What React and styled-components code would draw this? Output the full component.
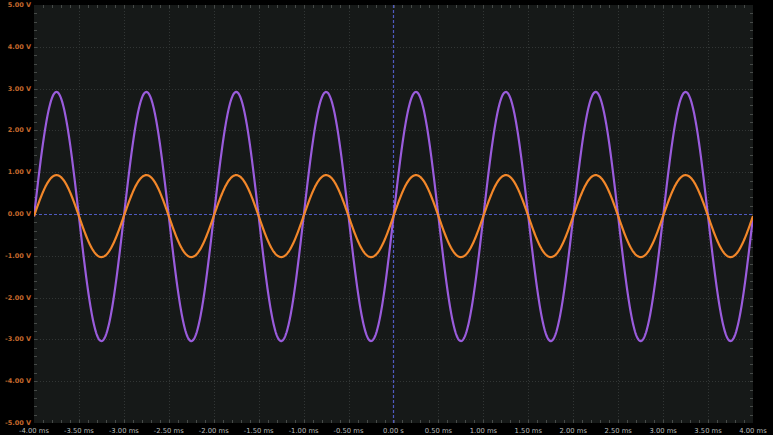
import React from 'react';
import styled, { createGlobalStyle } from 'styled-components';

const PLOT_W = 719;
const PLOT_H = 418;
const LABEL_H = 8;
const X_LABEL_W = 44;

const voltLabels = ['5.00 V', '4.00 V', '3.00 V', '2.00 V', '1.00 V', '0.00 V', '-1.00 V', '-2.00 V', '-3.00 V', '-4.00 V', '-5.00 V'];
const timeLabels = ['-4.00 ms', '-3.50 ms', '-3.00 ms', '-2.50 ms', '-2.00 ms', '-1.50 ms', '-1.00 ms', '-0.50 ms', '0.00 s', '0.50 ms', '1.00 ms', '1.50 ms', '2.00 ms', '2.50 ms', '3.00 ms', '3.50 ms', '4.00 ms'];

const GlobalStyle = createGlobalStyle`
  html, body {
    margin: 0;
    padding: 0;
    background: #000;
    overflow: hidden;
  }
`;

// time in ms -> x, volts -> y
const toX = (t) => (t + 4) / 8 * PLOT_W;
const toY = (v) => PLOT_H / 2 - v * (PLOT_H / 10);
const crisp = (n) => Math.round(n) + 0.5;

const wave = (amp, offset) => {
  let d = '';
  for (let px = 0; px <= PLOT_W; px += 0.5) {
    const t = px / PLOT_W * 8 - 4;
    const v = amp * Math.sin(2 * Math.PI * t) + offset;
    d += (px === 0 ? 'M' : 'L') + px.toFixed(1) + ' ' + toY(v).toFixed(2);
  }
  return d;
};

const Scope = () => {
  // major grid, centre lines left out (drawn blue below)
  const vLines = [];
  for (let i = 1; i < 16; i++) if (i !== 8) vLines.push(toX(-4 + i * 0.5));
  const hLines = [];
  for (let i = 1; i < 10; i++) if (i !== 5) hLines.push(toY(5 - i));

  const xTicks = [];
  for (let i = 1; i < 80; i++) xTicks.push(crisp(toX(-4 + i * 0.1)));
  const yTicks = [];
  for (let i = 1; i < 50; i++) yTicks.push(crisp(toY(5 - i * 0.2)));

  const cx = crisp(toX(0)) - 1;
  const cy = crisp(toY(0));

  return (
    <Screen>
      <VoltAxis>
        {voltLabels.map((l) => <VoltLabel key={l}>{l}</VoltLabel>)}
      </VoltAxis>
      <Plot>
        <svg width={PLOT_W} height={PLOT_H} viewBox={`0 0 ${PLOT_W} ${PLOT_H}`}>
          <rect width={PLOT_W} height={PLOT_H} fill="#161918" />
          <g stroke="#323635" strokeWidth="1" strokeDasharray="1 2">
            {vLines.map((x) => <line key={'v' + x} x1={crisp(x)} x2={crisp(x)} y1="0" y2={PLOT_H} />)}
            {hLines.map((y) => <line key={'h' + y} x1="0" x2={PLOT_W} y1={crisp(y)} y2={crisp(y)} />)}
          </g>
          <g stroke="#464a48" strokeWidth="1">
            {xTicks.map((x) => (
              <g key={'xt' + x}>
                <line x1={x} x2={x} y1="0" y2="3" />
                <line x1={x} x2={x} y1={PLOT_H - 3} y2={PLOT_H} />
              </g>
            ))}
            {yTicks.map((y) => (
              <g key={'yt' + y}>
                <line x1="0" x2="3" y1={y} y2={y} />
                <line x1={PLOT_W - 3} x2={PLOT_W} y1={y} y2={y} />
              </g>
            ))}
          </g>
          <g stroke="#4f5ac0" strokeWidth="1.2" strokeDasharray="3 2">
            <line x1={cx} x2={cx} y1="0" y2={PLOT_H} />
            <line x1="0" x2={PLOT_W} y1={cy} y2={cy} />
          </g>
          <path d={wave(2.98, -0.06)} fill="none" stroke="#9a5cdc" strokeWidth="2.2" />
          <path d={wave(0.98, -0.05)} fill="none" stroke="#f2872a" strokeWidth="2.2" />
        </svg>
      </Plot>
      <Spacer />
      <TimeAxis>
        {timeLabels.map((l) => <TimeLabel key={l}>{l}</TimeLabel>)}
      </TimeAxis>
    </Screen>
  );
};

export default function App() {
  return (
    <>
      <GlobalStyle />
      <Scope />
    </>
  );
}

const Screen = styled.div`
  width: 773px;
  height: 435px;
  box-sizing: border-box;
  padding-top: 5px;
  background: #000;
  display: grid;
  grid-template-columns: 34px ${PLOT_W}px;
  grid-template-rows: ${PLOT_H}px 12px;
  overflow: hidden;
`;

const VoltAxis = styled.div`
  display: flex;
  flex-direction: column;
  justify-content: space-between;
  align-items: flex-end;
  height: ${PLOT_H + LABEL_H}px;
  margin-top: -${LABEL_H / 2}px;
  padding-right: 3px;
`;

const VoltLabel = styled.span`
  height: ${LABEL_H}px;
  line-height: ${LABEL_H}px;
  font-family: "DejaVu Sans", sans-serif;
  font-size: 6.5px;
  font-weight: bold;
  color: #c4682c;
  white-space: nowrap;
`;

const Plot = styled.div`
  width: ${PLOT_W}px;
  height: ${PLOT_H}px;
  svg {
    display: block;
  }
`;

const Spacer = styled.div``;

const TimeAxis = styled.div`
  display: flex;
  justify-content: space-between;
  align-items: flex-end;
  width: ${PLOT_W + X_LABEL_W}px;
  margin-left: -${X_LABEL_W / 2}px;
`;

const TimeLabel = styled.span`
  width: ${X_LABEL_W}px;
  height: 8px;
  line-height: 8px;
  text-align: center;
  font-family: "DejaVu Sans", sans-serif;
  font-size: 6.8px;
  color: #b8bcbc;
  white-space: nowrap;
`;
